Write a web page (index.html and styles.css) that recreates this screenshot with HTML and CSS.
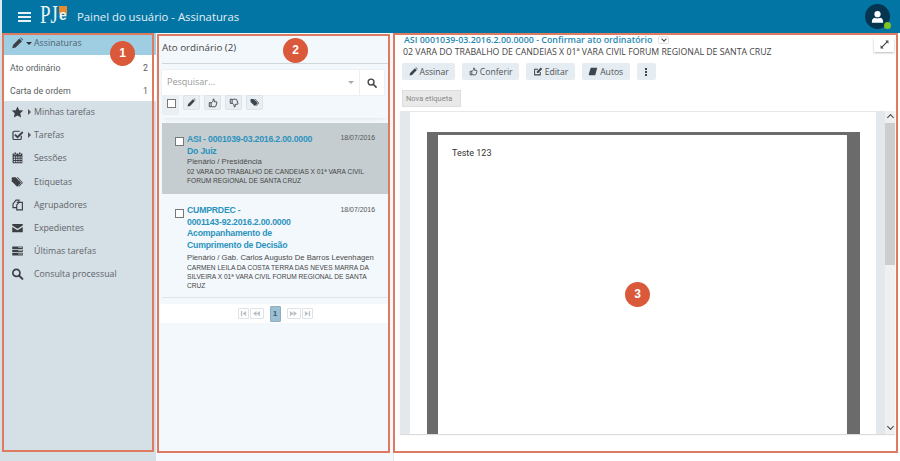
FILE: index.html
```html
<!DOCTYPE html>
<html lang="pt-BR">
<head>
<meta charset="utf-8">
<title>Painel do usuário - Assinaturas</title>
<link rel="stylesheet" href="styles.css">
</head>
<body>
<svg class="defs" width="0" height="0" aria-hidden="true">
  <symbol id="i-pencil" viewBox="0 0 16 16"><path d="M1 15l1-4.500L10.500 2l3.500 3.500L5.500 14z"/><path d="M11.500 1l1-.5 3 3-.5 1z"/></symbol>
  <symbol id="i-thumb-up" viewBox="0 0 16 16"><path fill="none" stroke="currentColor" stroke-width="1.500" d="M2 7.500h3v6.500H2zM5 8l3-3 .5-3.500c1.500 0 2 1.500 1.500 4.500h3.500c1 0 1 1 .5 2l-1.500 5c-.2.700-.8 1-1.500 1H7l-2-1"/></symbol>
  <symbol id="i-thumb-down" viewBox="0 0 16 16"><path fill="none" stroke="currentColor" stroke-width="1.500" d="M2 2h3v6.500H2zM5 8l3 3 .5 3.500c1.500 0 2-1.500 1.500-4.500h3.500c1 0 1-1 .5-2l-1.500-5c-.2-.7-.8-1-1.500-1H7l-2 1"/></symbol>
  <symbol id="i-tag" viewBox="0 0 18 16"><path d="M1 2.500V7l7.500 7.500L14 9 6.500 1.500H2C1.400 1.500 1 2 1 2.500z"/><path d="M9.500 1.500l7 7.500-5.500 5.500-1-1L15 9 8 1.500z"/></symbol>
  <symbol id="i-search" viewBox="0 0 16 16"><circle cx="6.500" cy="6.500" r="4.700" fill="none" stroke="currentColor" stroke-width="2.200"/><path d="M10 10l4.500 4.500" stroke="currentColor" stroke-width="2.600" stroke-linecap="round"/></symbol>
  <symbol id="i-first" viewBox="0 0 8 8"><path d="M1 1h1.500v6H1zM7 1v6L3 4z"/></symbol>
  <symbol id="i-prev" viewBox="0 0 10 8"><path d="M5 1v6L1 4zM9 1v6L5 4z"/></symbol>
  <symbol id="i-next" viewBox="0 0 10 8"><path d="M1 1v6l4-3zM5 1v6l4-3z"/></symbol>
  <symbol id="i-last" viewBox="0 0 8 8"><path d="M1 1v6l4-3zM5.500 1H7v6H5.500z"/></symbol>
</svg>

<header class="topbar">
  <button class="burger" type="button" aria-label="Menu"><span></span><span></span><span></span></button>
  <div class="logo"><span class="logo-pj">PJ</span><span class="logo-e">e</span></div>
  <h1 class="page-title">Painel do usuário - Assinaturas</h1>
  <div class="avatar">
    <svg viewBox="0 0 16 16" width="13" height="14"><circle cx="8" cy="4.500" r="3.800" fill="#fff"/><path d="M1 15c0-4 1.500-5.500 3.500-6 1 1 6 1 7 0 2 .5 3.500 2 3.500 6z" fill="#fff"/></svg>
    <span class="presence"></span>
  </div>
</header>

<main class="workspace">
  <nav class="sidebar">
    <div class="menu-row menu-row-active">
      <svg class="menu-icon"><use href="#i-pencil"/></svg>
      <span class="caret caret-down"></span>
      <span>Assinaturas</span>
    </div>
    <div class="submenu">
      <div class="submenu-row"><span>Ato ordinário</span><span>2</span></div>
      <div class="submenu-row"><span>Carta de ordem</span><span>1</span></div>
    </div>
    <div class="menu-row">
      <svg class="menu-icon" viewBox="0 0 16 16"><path d="M8 .5l2.300 5 5.400.6-4 3.700 1.100 5.400L8 12.500l-4.800 2.700 1.100-5.400-4-3.700 5.400-.6z"/></svg>
      <span class="caret caret-right"></span>
      <span>Minhas tarefas</span>
    </div>
    <div class="menu-row">
      <svg class="menu-icon" viewBox="0 0 16 16"><path d="M13 9v3.500c0 1-.5 1.500-1.500 1.500h-8C2.500 14 2 13.500 2 12.500v-8C2 3.500 2.500 3 3.500 3H11" fill="none" stroke="currentColor" stroke-width="1.600"/><path d="M4.500 7.500L8 11l7-7" fill="none" stroke="currentColor" stroke-width="2.400"/></svg>
      <span class="caret caret-right"></span>
      <span>Tarefas</span>
    </div>
    <div class="menu-row">
      <svg class="menu-icon" viewBox="0 0 16 16"><path d="M4 .5h2V3H4zM10 .5h2V3h-2zM1.500 2H3.500v1.500h3V2h3v1.500h3V2h2v13h-13zM3 6v1.800h2V6zm3.100 0v1.800h1.800V6zm3 0v1.800h1.800V6zM12 6v1.800h1.500V6zM3 9v1.800h2V9zm3.100 0v1.800h1.800V9zm3 0v1.800h1.800V9zM12 9v1.800h1.500V9zM3 12v1.600h2V12zm3.100 0v1.600h1.800V12zm3 0v1.600h1.800V12zm2.900 0v1.600h1.500V12z" fill-rule="evenodd"/></svg>
      <span class="caret caret-none"></span>
      <span>Sessões</span>
    </div>
    <div class="menu-row">
      <svg class="menu-icon"><use href="#i-tag"/></svg>
      <span class="caret caret-none"></span>
      <span>Etiquetas</span>
    </div>
    <div class="menu-row">
      <svg class="menu-icon" viewBox="0 0 16 16"><path d="M6 1.500h4v3L7 8v3.500H2V6.500zM7 4.500h7.500v10H7V11.500" fill="none" stroke="currentColor" stroke-width="1.500"/></svg>
      <span class="caret caret-none"></span>
      <span>Agrupadores</span>
    </div>
    <div class="menu-row">
      <svg class="menu-icon" viewBox="0 0 16 16"><path d="M1 2.500h14v2L8 9 1 4.500zM1 6.500L8 11l7-4.500v7H1z"/></svg>
      <span class="caret caret-none"></span>
      <span>Expedientes</span>
    </div>
    <div class="menu-row">
      <svg class="menu-icon" viewBox="0 0 16 16"><path d="M1 2h14v3.300H1zM1 6.400h14v3.300H1zM1 10.800h14V14H1z"/><path d="M9 3h5M9 7.500h5M9 12h5" stroke="#d7e0e7" stroke-width="1"/></svg>
      <span class="caret caret-none"></span>
      <span>Últimas tarefas</span>
    </div>
    <div class="menu-row">
      <svg class="menu-icon"><use href="#i-search"/></svg>
      <span class="caret caret-none"></span>
      <span>Consulta processual</span>
    </div>
  </nav>

  <section class="task-list">
    <h2 class="list-title">Ato ordinário (2)</h2>
    <div class="search">
      <span class="search-input">Pesquisar...</span>
      <span class="search-caret"></span>
      <button class="search-button" type="button" aria-label="Pesquisar"><svg width="10" height="10"><use href="#i-search"/></svg></button>
    </div>
    <div class="list-tools">
      <span class="check-wrap"><span class="checkbox"></span></span>
      <button class="tool" type="button" aria-label="Assinar"><svg width="9" height="9"><use href="#i-pencil"/></svg></button>
      <button class="tool" type="button" aria-label="Aprovar"><svg width="10" height="10"><use href="#i-thumb-up"/></svg></button>
      <button class="tool" type="button" aria-label="Reprovar"><svg width="10" height="10"><use href="#i-thumb-down"/></svg></button>
      <button class="tool" type="button" aria-label="Etiquetar"><svg width="10" height="9"><use href="#i-tag"/></svg></button>
    </div>

    <article class="task task-selected">
      <span class="checkbox task-check"></span>
      <div class="task-body">
        <div class="task-head">
          <a class="task-title">ASI - 0001039-03.2016.2.00.0000<br>Do Juiz</a>
          <time class="task-date">18/07/2016</time>
        </div>
        <p class="task-org">Plenário / Presidência</p>
        <p class="task-parts">02 VARA DO TRABALHO DE CANDEIAS X 01ª VARA CIVIL FORUM REGIONAL DE SANTA CRUZ</p>
      </div>
    </article>

    <article class="task">
      <span class="checkbox task-check"></span>
      <div class="task-body">
        <div class="task-head">
          <a class="task-title">CUMPRDEC -<br>0001143-92.2016.2.00.0000<br>Acompanhamento de<br>Cumprimento de Decisão</a>
          <time class="task-date">18/07/2016</time>
        </div>
        <p class="task-org">Plenário / Gab. Carlos Augusto De Barros Levenhagen</p>
        <p class="task-parts">CARMEN LEILA DA COSTA TERRA DAS NEVES MARRA DA SILVEIRA X 01ª VARA CIVIL FORUM REGIONAL DE SANTA CRUZ</p>
      </div>
    </article>

    <div class="pager">
      <span class="page-btn page-btn-end"><svg width="7" height="7"><use href="#i-first"/></svg></span>
      <span class="page-btn page-btn-wide"><svg width="9" height="7"><use href="#i-prev"/></svg></span>
      <span class="page-btn page-current">1</span>
      <span class="page-btn page-btn-wide"><svg width="9" height="7"><use href="#i-next"/></svg></span>
      <span class="page-btn page-btn-end"><svg width="7" height="7"><use href="#i-last"/></svg></span>
    </div>
  </section>

  <section class="detail">
    <div class="detail-head">
      <a class="detail-title">ASI 0001039-03.2016.2.00.0000 - Confirmar ato ordinatório</a>
      <span class="detail-toggle"></span>
    </div>
    <p class="detail-sub">02 VARA DO TRABALHO DE CANDEIAS X 01ª VARA CIVIL FORUM REGIONAL DE SANTA CRUZ</p>
    <div class="actions">
      <button class="action" type="button"><svg width="9" height="9"><use href="#i-pencil"/></svg>Assinar</button>
      <button class="action" type="button"><svg width="9" height="9"><use href="#i-thumb-up"/></svg>Conferir</button>
      <button class="action" type="button"><svg width="10" height="9" viewBox="0 0 16 16"><path d="M12 9v5H2V4h6" fill="none" stroke="currentColor" stroke-width="1.800"/><path d="M6 10.500V8l7-7 2.500 2.500-7 7z"/></svg>Editar</button>
      <button class="action" type="button"><svg width="10" height="9" viewBox="0 0 16 16"><path d="M4 1.500h11.500L12 14.500H1.500C.5 14.500 0 13.500.5 12.500z"/></svg>Autos</button>
      <button class="action action-more" type="button" aria-label="Mais"><span class="dots"></span></button>
    </div>
    <div class="tag-input">Nova etiqueta</div>
    <div class="viewer">
      <div class="viewer-gutter"></div>
      <div class="viewer-sheet">
        <div class="doc-frame">
          <div class="doc-page">Teste 123</div>
        </div>
      </div>
      <div class="viewer-gutter viewer-gutter-right"></div>
      <div class="viewer-scroll">
        <span class="scroll-arrow scroll-up"></span>
        <span class="scroll-thumb"></span>
        <span class="scroll-arrow scroll-down"></span>
      </div>
    </div>
    <button class="expand" type="button" aria-label="Expandir">
      <svg viewBox="0 0 16 16" width="9" height="9"><path d="M9.500 1H15v5.500L13 4.500 4.500 13 6.500 15H1V9.500L3 11.500 11.500 3z"/></svg>
    </button>
  </section>
</main>

<div class="callout callout-sidebar"><span class="callout-num">1</span></div>
<div class="callout callout-list"><span class="callout-num">2</span></div>
<div class="callout callout-detail"><span class="callout-num">3</span></div>
</body>
</html>
```
FILE: styles.css
```css
* { box-sizing: border-box; }
html, body { margin: 0; padding: 0; }
body {
  position: relative;
  width: 900px;
  height: 461px;
  overflow: hidden;
  background: #fff;
  font-family: "Open Sans", sans-serif;
  color: #444;
}
button { font: inherit; color: inherit; padding: 0; border: 0; background: none; }
p, h1, h2 { margin: 0; font-weight: 400; }
svg { fill: currentColor; display: block; flex: none; }
.defs { position: absolute; }

/* top bar */
.topbar {
  height: 33px;
  background: #0375a4;
  border-left: 2px solid #dcebf1;
  display: flex;
  align-items: center;
  padding-left: 16px;
  padding-right: 10px;
  color: #fff;
}
.burger { width: 13px; display: flex; flex-direction: column; gap: 2px; margin-right: 9px; }
.burger span { display: block; height: 2px; background: #e8f2f6; }
.logo { width: 28px; height: 33px; display: flex; margin-right: 9px; }
.logo-pj {
  color: #e9f3f3;
  font-family: "Liberation Serif", serif;
  font-size: 25px;
  line-height: 30px;
  width: 19px;
  transform: scaleX(.76);
  transform-origin: left center;
  white-space: nowrap;
}
.logo-e {
  color: #f4f7f4;
  background: linear-gradient(#e58a2e 0 42%, transparent 42%);
  font-family: "Liberation Sans", sans-serif;
  font-weight: 700;
  font-size: 14px;
  line-height: 19px;
  width: 8px;
  height: 18px;
  text-align: center;
  margin-top: 6px;
}
.page-title { font-size: 11.300px; color: #e4f0f5; flex: 1; }
.avatar {
  position: relative;
  width: 25px;
  height: 25px;
  border-radius: 50%;
  background: #06364f;
  display: flex;
  align-items: center;
  justify-content: center;
}
.presence { position: absolute; right: -1px; bottom: 0; width: 7px; height: 7px; border-radius: 50%; background: #7ec521; }

/* page columns */
.workspace { display: flex; height: 428px; }

.sidebar { width: 156px; background: #d5dfe6; padding-left: 3px; flex: none; }
.menu-row {
  height: 23.200px;
  display: flex;
  align-items: center;
  padding-left: 8px;
  padding-bottom: 1px;
  font-size: 8.800px;
  color: #5f6468;
}
.menu-row-active { height: 22px; background: #9fcde2; padding-bottom: 2px; color: #4f6270; }
.menu-icon { width: 13px; height: 12px; color: #3c4044; margin-right: 2px; }
.caret { display: block; flex: none; }
.caret-none { width: 5px; margin-right: 3px; }
.caret-down { width: 6px; height: 0; margin-right: 2px; border-left: 3px solid transparent; border-right: 3px solid transparent; border-top: 3px solid #333; }
.caret-right { width: 3px; height: 0; margin: 0 3px 0 2px; border-top: 3px solid transparent; border-bottom: 3px solid transparent; border-left: 3px solid #555; }
.submenu { background: #fff; padding-top: 1px; height: 46px; }
.submenu-row {
  height: 23px;
  display: flex;
  align-items: center;
  justify-content: space-between;
  padding: 0 8px 0 7px;
  font-family: Roboto, sans-serif;
  font-size: 8.800px;
  color: #5a5e61;
}

/* task list column */
.task-list {
  width: 238px;
  flex: none;
  background: #f3f8fc;
  padding: 0 5px 0 6px;
  border-right: 1px solid #e4e8ec;
}
.list-title {
  height: 31px;
  border-bottom: 1px solid #cfd6dc;
  font-size: 9.800px;
  line-height: 30px;
  color: #444;
}
.search {
  margin-top: 6px;
  height: 25px;
  display: flex;
  align-items: stretch;
  background: #fff;
  box-shadow: 0 0 1px #c5ccd2;
  width: 222px;
}
.search-input { flex: 1; padding-left: 5px; font-size: 9px; line-height: 24px; color: #999; }
.search-caret { width: 0; height: 0; align-self: center; border-left: 3px solid transparent; border-right: 3px solid transparent; border-top: 3px solid #aaa; margin-right: 5px; }
.search-button { width: 25px; display: flex; align-items: center; justify-content: center; color: #444; border-left: 1px solid #eceff1; }
.list-tools {
  height: 23px;
  display: flex;
  gap: 4px;
  align-items: flex-start;
  box-shadow: 0 4px 4px -3px #dfe7ec;
  margin-bottom: 5px;
}
.check-wrap { width: 17px; height: 20px; background: #eaeff3; display: flex; justify-content: center; padding: 4px 0 0 1px; border-radius: 0 0 2px 2px; }
.tool { width: 17px; height: 15px; background: #e9eef2; border: 1px solid #dde3e8; border-radius: 2px; display: flex; align-items: center; justify-content: center; color: #3c4650; }
.checkbox { width: 9px; height: 9px; background: #fff; border: 1px solid #777; display: block; flex: none; }

.task { display: flex; padding: 10px 13px 0 13px; border-bottom: 1px solid #dfe5ea; }
.task-selected { background: #c5cdd0; height: 71px; border-bottom: 0; margin-bottom: 1px; padding-top: 11px; }
.task:not(.task-selected) { height: 103px; }
.task-check { margin-top: 4px; margin-right: 3px; }
.task-selected .task-check { margin-top: 3px; }
.task-body { flex: 1; min-width: 0; font-family: "Liberation Sans", sans-serif; }
.task-head { display: flex; justify-content: space-between; }
.task-title { font-size: 8.700px; letter-spacing: -.2px; font-weight: 700; line-height: 11.700px; color: #2b93bd; }
.task-date { font-size: 6.900px; color: #555; line-height: 9px; flex: none; }
.task-selected .task-date { margin-top: -1px; }
.task-org { font-size: 7.700px; color: #4a4a4a; line-height: 11px; }
.task-selected .task-org { line-height: 10px; }
.task-parts { font-size: 6.600px; color: #444; line-height: 9px; }

.pager {
  height: 19px;
  margin: 6px -2px 0;
  background: #fff;
  display: flex;
  align-items: center;
  justify-content: center;
  gap: 1px;
}
.page-btn { height: 11px; border: 1px solid #dde3e7; border-radius: 1px; display: flex; align-items: center; justify-content: center; color: #b9c0c6; }
.page-btn-end { width: 11px; }
.page-btn-wide { width: 14px; }
.page-current { width: 11px; height: 16px; margin: 0 5px; background: #9dbfd2; border-color: #8fb0c3; color: #2f5f7a; font: 700 8px/14px "Liberation Sans", sans-serif; }

/* process detail column */
.detail { position: relative; flex: 1; min-width: 0; padding: 0 5px 0 8px; display: flex; flex-direction: column; background: #fff; }
.detail-head { height: 13px; display: flex; align-items: center; gap: 6px; padding-left: 2px; }
.detail-title { font-size: 8.900px; font-weight: 600; color: #1f87b3; line-height: 14px; margin-top: 1px; }
.detail-toggle { width: 11px; height: 8px; border: 1px solid #dfe3e6; border-radius: 2px; position: relative; }
.detail-toggle::after { content: ""; position: absolute; left: 3px; top: 0; width: 3px; height: 3px; border-right: 1px solid #444; border-bottom: 1px solid #444; transform: rotate(45deg); }
.detail-sub { font-size: 8.750px; line-height: 12px; color: #444; white-space: nowrap; padding-left: 1px; }
.actions { display: flex; gap: 7px; margin-top: 5px; height: 17px; }
.action { height: 17px; padding: 0 6.500px; background: #e6edf2; border-radius: 2px; display: flex; align-items: center; gap: 2px; font-size: 8.600px; color: #4c5155; }
.action svg { color: #3c4650; }
.action-more { width: 19px; justify-content: center; padding: 0; }
.dots { width: 2px; height: 8px; background: repeating-linear-gradient(#3c4650 0 2px, transparent 2px 3px); }
.tag-input { margin-top: 10px; width: 59px; height: 17px; background: #e9e9e9; border: 1px solid #ddd; font-family: Roboto, sans-serif; font-size: 7.500px; line-height: 15px; padding-left: 3px; color: #888; }
.viewer { margin-top: 4px; margin-left: -2px; height: 323px; display: flex; overflow: hidden; box-shadow: 0 1px 1px #ddd; }
.viewer-gutter { width: 10px; background: #e2e8ec; flex: none; }
.viewer-gutter-right { width: 9px; }
.viewer-sheet { width: 466px; background: #fff; padding: 20px 16px 0 17px; flex: none; border-top: 1px solid #e8e8e8; }
.doc-frame { background: #6b6b6b; padding: 3px 13px 0 11px; height: 100%; }
.doc-page { background: #fff; height: 100%; padding: 12px 14px; font-family: Roboto, sans-serif; font-size: 9px; line-height: 12px; color: #333; }
.viewer-scroll { width: 10px; flex: none; background: #f0f0f0; display: flex; flex-direction: column; align-items: center; }
.scroll-thumb { width: 100%; flex: none; height: 142px; background: #cdcdcd; }
.scroll-arrow { flex: none; width: 100%; height: 12px; position: relative; }
.scroll-arrow::after { content: ""; position: absolute; left: 3px; width: 4px; height: 4px; border-left: 1px solid #444; border-top: 1px solid #444; }
.scroll-up::after { top: 4px; transform: rotate(45deg); }
.scroll-down { margin-top: auto; }
.scroll-down::after { top: 2px; transform: rotate(225deg); }
.expand { position: absolute; top: 4px; right: 6px; width: 20px; height: 15px; background: #fff; box-shadow: 0 1px 2px #bbb; display: flex; align-items: center; justify-content: center; color: #444; }

/* numbered region callouts drawn over the page */
.callout { position: absolute; border: 2px solid #dc7a62; pointer-events: none; }
.callout-sidebar { left: 2px; top: 33px; width: 152px; height: 419px; }
.callout-list { left: 157px; top: 34px; width: 233px; height: 419px; }
.callout-detail { left: 393px; top: 33px; width: 505px; height: 420px; }
.callout-num {
  position: absolute;
  width: 25px;
  height: 25px;
  border-radius: 50%;
  background: #d9593a;
  color: #fff;
  font: 700 12px/25px "Liberation Sans", sans-serif;
  text-align: center;
}
.callout-sidebar .callout-num { left: 106px; top: 6px; }
.callout-list .callout-num { left: 124px; top: 2px; }
.callout-detail .callout-num { left: 230px; top: 247px; }
```
